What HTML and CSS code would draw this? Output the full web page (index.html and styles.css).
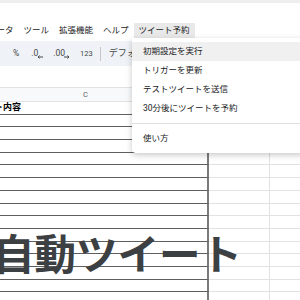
FILE: index.html
```html
<!DOCTYPE html>
<html lang="ja">
  <head>
    <meta charset="UTF-8" />
    <title>自動ツイート</title>
    <link rel="stylesheet" href="styles.css">
  </head>
  <body>
    <div class="top-edge"></div>
    <nav class="menubar">
      <span class="menu-item">データ</span>
      <span class="menu-item">ツール</span>
      <span class="menu-item">拡張機能</span>
      <span class="menu-item">ヘルプ</span>
      <span class="menu-item open">ツイート予約</span>
    </nav>
    <div class="toolbar">
      <span class="tb pct">%</span>
      <span class="tb dec">.0<svg width="6" height="4" viewBox="0 0 6 4"><path d="M6 2H1M2.5 0.5L1 2l1.5 1.5" fill="none" stroke="#444746" stroke-width="1"/></svg></span>
      <span class="tb dec">.00<svg width="6" height="4" viewBox="0 0 6 4"><path d="M0 2h5M3.5 0.5L5 2 3.5 3.5" fill="none" stroke="#444746" stroke-width="1"/></svg></span>
      <span class="tb num">123</span>
      <span class="tb-sep"></span>
      <span class="tb font">デフォ...</span>
    </div>
    <div class="formula"></div>
    <div class="sheet">
      <div class="row head">
        <div class="cell main">C</div>
        <div class="cell"></div>
        <div class="cell"></div>
      </div>
      <div class="row">
        <div class="cell main title">ツイート内容</div>
        <div class="cell"></div>
        <div class="cell"></div>
      </div>
      <div class="row"><div class="cell main"></div><div class="cell"></div><div class="cell"></div></div>
      <div class="row"><div class="cell main"></div><div class="cell"></div><div class="cell"></div></div>
      <div class="row"><div class="cell main"></div><div class="cell"></div><div class="cell"></div></div>
      <div class="row"><div class="cell main"></div><div class="cell"></div><div class="cell"></div></div>
      <div class="row"><div class="cell main"></div><div class="cell"></div><div class="cell"></div></div>
      <div class="row"><div class="cell main"></div><div class="cell"></div><div class="cell"></div></div>
      <div class="row"><div class="cell main"></div><div class="cell"></div><div class="cell"></div></div>
      <div class="row"><div class="cell main"></div><div class="cell"></div><div class="cell"></div></div>
      <div class="row"><div class="cell main"></div><div class="cell"></div><div class="cell"></div></div>
      <div class="row"><div class="cell main"></div><div class="cell"></div><div class="cell"></div></div>
      <div class="row"><div class="cell main"></div><div class="cell"></div><div class="cell"></div></div>
      <div class="row"><div class="cell main"></div><div class="cell"></div><div class="cell"></div></div>
      <div class="row"><div class="cell main"></div><div class="cell"></div><div class="cell"></div></div>
      <div class="row"><div class="cell main"></div><div class="cell"></div><div class="cell"></div></div>
      <div class="row"><div class="cell main"></div><div class="cell"></div><div class="cell"></div></div>
    </div>
    <div class="big-title">自動ツイート</div>
    <ul class="dropdown">
      <li class="active">初期設定を実行</li>
      <li>トリガーを更新</li>
      <li>テストツイートを送信</li>
      <li>30分後にツイートを予約</li>
      <li class="sep"></li>
      <li>使い方</li>
    </ul>
  </body>
</html>
```
FILE: styles.css
```css
body {
  margin: 0;
  width: 300px;
  height: 300px;
  overflow: hidden;
  position: relative;
  background: #fff;
  font-family: Roboto, "Noto Sans CJK JP", sans-serif;
  color: #202124;
}
.top-edge {
  height: 3px;
  background: #eeeeee;
}
.menubar {
  display: flex;
  height: 15px;
  padding: 20px 0 3px;
  margin-left: -17px;
  white-space: nowrap;
}
.menu-item {
  padding: 0 5px;
  font-size: 8.5px;
  line-height: 15px;
  color: #202124;
}
.menu-item.open {
  background: #e9e9e9;
}
.toolbar {
  display: flex;
  align-items: center;
  height: 25px;
  background: #eff2f6;
  padding-left: 13px;
  color: #444746;
  white-space: nowrap;
}
.tb {
  font-size: 8.5px;
  line-height: 25px;
}
.pct {
  margin-right: 12px;
}
.dec {
  margin-right: 10px;
}
.dec svg {
  vertical-align: -3px;
  margin-left: -1px;
}
.num {
  font-size: 7.5px;
  margin-right: 7px;
}
.tb-sep {
  width: 1px;
  height: 14px;
  background: #c7c7c7;
  margin-right: 8px;
}
.font {
  font-size: 9px;
}
.formula {
  height: 21px;
}
.sheet {
  margin-left: -36px;
}
.row {
  display: grid;
  grid-template-columns: 245px 60px 40px;
  height: 12.7px;
}
.cell {
  box-sizing: border-box;
  border-bottom: 1px solid #e2e2e2;
  border-left: 1px solid #e2e2e2;
  font-size: 9px;
  line-height: 11px;
  padding-left: 3px;
  white-space: nowrap;
  overflow: hidden;
}
.cell.main {
  border-left: none;
  border-right: 2px solid #7a7a7a;
  border-bottom-color: #5f5f5f;
}
.cell.main + .cell {
  border-left: none;
}
.row.head {
  height: 14px;
  border-top: 1px solid #e2e2e2;
  background: #f8f9fa;
}
.row.head .cell {
  border-bottom-color: #e2e2e2;
}
.row.head .main {
  text-align: center;
  color: #5f6368;
  font-size: 7.5px;
  line-height: 13px;
  padding-left: 0;
}
.title {
  font-weight: bold;
  color: #000;
}
.big-title {
  position: absolute;
  left: -7px;
  top: 231px;
  font-family: "Noto Sans CJK JP", sans-serif;
  font-size: 41.5px;
  line-height: 42px;
  font-weight: bold;
  color: #3c4043;
  white-space: nowrap;
}
.dropdown {
  position: absolute;
  left: 132px;
  top: 38px;
  width: 200px;
  margin: 0;
  padding: 4px 0 5px;
  list-style: none;
  background: #fff;
  box-shadow: 0 2px 6px rgba(0, 0, 0, 0.22);
  border-radius: 0 0 0 4px;
}
.dropdown li {
  height: 19px;
  line-height: 19px;
  padding-left: 11px;
  font-size: 8.5px;
  color: #202124;
  white-space: nowrap;
}
.dropdown li.active {
  background: #f0f0f0;
}
.dropdown li.sep {
  height: 1px;
  background: #e0e0e0;
  margin: 5px 0;
}
```
